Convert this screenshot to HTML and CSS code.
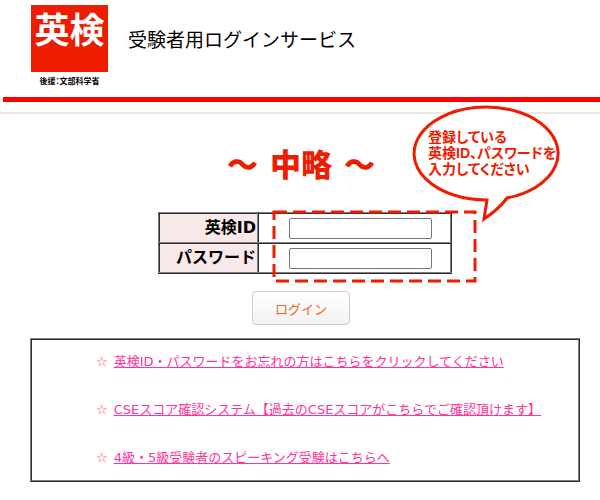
FILE: index.html
```html
<!doctype html>
<html lang="ja">
  <head>
    <meta charset="UTF-8" />
    <meta name="viewport" content="width=device-width, initial-scale=1" />
    <title>受験者用ログインサービス</title>
    <link rel="stylesheet" href="styles.css">
  </head>
  <body>
    <header class="header">
      <div class="brand">
        <div class="logo">英検</div>
        <div class="support">後援：文部科学省</div>
      </div>
      <h1 class="title">受験者用ログインサービス</h1>
    </header>
    <div class="divider"></div>

    <main class="main">
      <p class="omitted"><span>～</span><span>中略</span><span>～</span></p>

      <form class="login-form" action="#" method="post">
        <div class="fields">
          <table class="login-table">
            <tr>
              <th scope="row"><label for="eiken_id">英検ID</label></th>
              <td><input type="text" id="eiken_id" name="eiken_id" /></td>
            </tr>
            <tr>
              <th scope="row"><label for="password">パスワード</label></th>
              <td><input type="password" id="password" name="password" /></td>
            </tr>
          </table>

          <svg class="marker" width="206" height="74" viewBox="0 0 206 74" aria-hidden="true">
            <path d="M2 2H203V71H2Z" fill="none" stroke="#ee1c00" stroke-width="3" stroke-dasharray="13 6" />
          </svg>

          <div class="callout">
            <svg class="bubble" width="150" height="118" viewBox="0 0 150 118" aria-hidden="true">
              <path d="M76 95A72 46.500 0 1 1 96 93Q88 104 73 114Z" fill="#fff" stroke="#ee1c00" stroke-width="3" />
            </svg>
            <p class="callout-text">登録している<br />英検ID、パスワードを<br />入力してください</p>
          </div>
        </div>
        <div class="submit">
          <button type="submit" class="login-button">ログイン</button>
        </div>
      </form>

      <ul class="links">
        <li><a href="#">英検ID・パスワードをお忘れの方はこちらをクリックしてください</a></li>
        <li><a href="#">CSEスコア確認システム【過去のCSEスコアがこちらでご確認頂けます】</a></li>
        <li><a href="#">4級・5級受験者のスピーキング受験はこちらへ</a></li>
      </ul>
    </main>
  </body>
</html>
```
FILE: styles.css
```css
* {
  box-sizing: border-box;
}
body {
  margin: 0;
  background: #fff;
  color: #000;
  font-family: "DejaVu Sans", "Noto Sans CJK JP", sans-serif;
  font-size: 13px;
}
.header {
  display: flex;
  gap: 20px;
  height: 102px;
  margin-left: 3px;
  padding: 5px 0 0 28px;
  border-bottom: 5px solid #f00;
}
.brand {
  width: 77px;
  text-align: center;
}
.logo {
  height: 67px;
  background: #ee1c00;
  color: #fff;
  font-family: "Noto Sans CJK JP", sans-serif;
  font-size: 35px;
  font-weight: bold;
  line-height: 46px;
}
.support {
  font-family: "Noto Sans CJK JP", sans-serif;
  font-size: 8px;
  font-weight: bold;
  font-feature-settings: "palt";
  line-height: 18px;
  white-space: nowrap;
}
.title {
  margin: 0;
  font-family: "Noto Sans CJK JP", sans-serif;
  font-size: 19px;
  font-weight: normal;
  line-height: 68px;
}
.divider {
  height: 12px;
  border-bottom: 2px solid #e8e8e8;
}
.main {
  padding: 30px 20px 16px 30px;
}
.omitted {
  display: flex;
  justify-content: center;
  gap: 12px;
  margin: 0;
  padding-right: 8px;
  color: #ee1c00;
  font-family: "Noto Sans CJK JP", sans-serif;
  font-size: 31px;
  font-weight: 900;
  line-height: 38px;
}
.login-form {
  padding-top: 30px;
}
.fields {
  position: relative;
  width: 294px;
  margin: 0 auto;
}
.login-table {
  width: 100%;
  border: 2px ridge #808080;
  border-collapse: collapse;
}
.login-table th,
.login-table td {
  height: 30px;
  padding: 0;
  border: 2px ridge #808080;
}
.login-table th {
  width: 99px;
  padding-right: 1px;
  background: #f8e8e8;
  font-size: 16px;
  line-height: 20px;
  text-align: right;
}
.login-table td {
  text-align: center;
  padding-left: 12px;
}
.login-table input {
  display: block;
  width: 143px;
  height: 21px;
  margin: 0 auto;
  border: 1px solid #767676;
  border-radius: 2px;
}
.marker {
  position: absolute;
  top: -2px;
  left: 114px;
  pointer-events: none;
}
.callout {
  position: absolute;
  top: -107px;
  left: 253px;
  width: 150px;
  height: 118px;
}
.bubble {
  display: block;
}
.callout-text {
  position: absolute;
  top: 24px;
  left: 17px;
  margin: 0;
  color: #ee1c00;
  font-family: "Liberation Sans", "Noto Sans CJK JP", sans-serif;
  font-size: 14px;
  font-weight: bold;
  font-feature-settings: "palt";
  line-height: 16px;
  white-space: nowrap;
}
.submit {
  padding: 17px 8px 13px 0;
  text-align: center;
}
.login-button {
  display: block;
  width: 98px;
  height: 34px;
  margin: 0 auto;
  padding: 0;
  border: 1px solid #ccc;
  border-radius: 4px;
  background: linear-gradient(#fff, #f2f2f2);
  color: #f26522;
  font-family: "Noto Sans CJK JP", sans-serif;
  font-size: 13px;
}
.links {
  display: flex;
  flex-direction: column;
  gap: 28px;
  margin: 0;
  padding: 12px 16px 12px 64px;
  border: 2px ridge #808080;
  list-style: none;
}
.links li {
  display: flex;
  gap: 6px;
  color: #ff3030;
  line-height: 20px;
}
.links li::before {
  content: "☆";
}
.links a {
  color: #ff3399;
}
```
